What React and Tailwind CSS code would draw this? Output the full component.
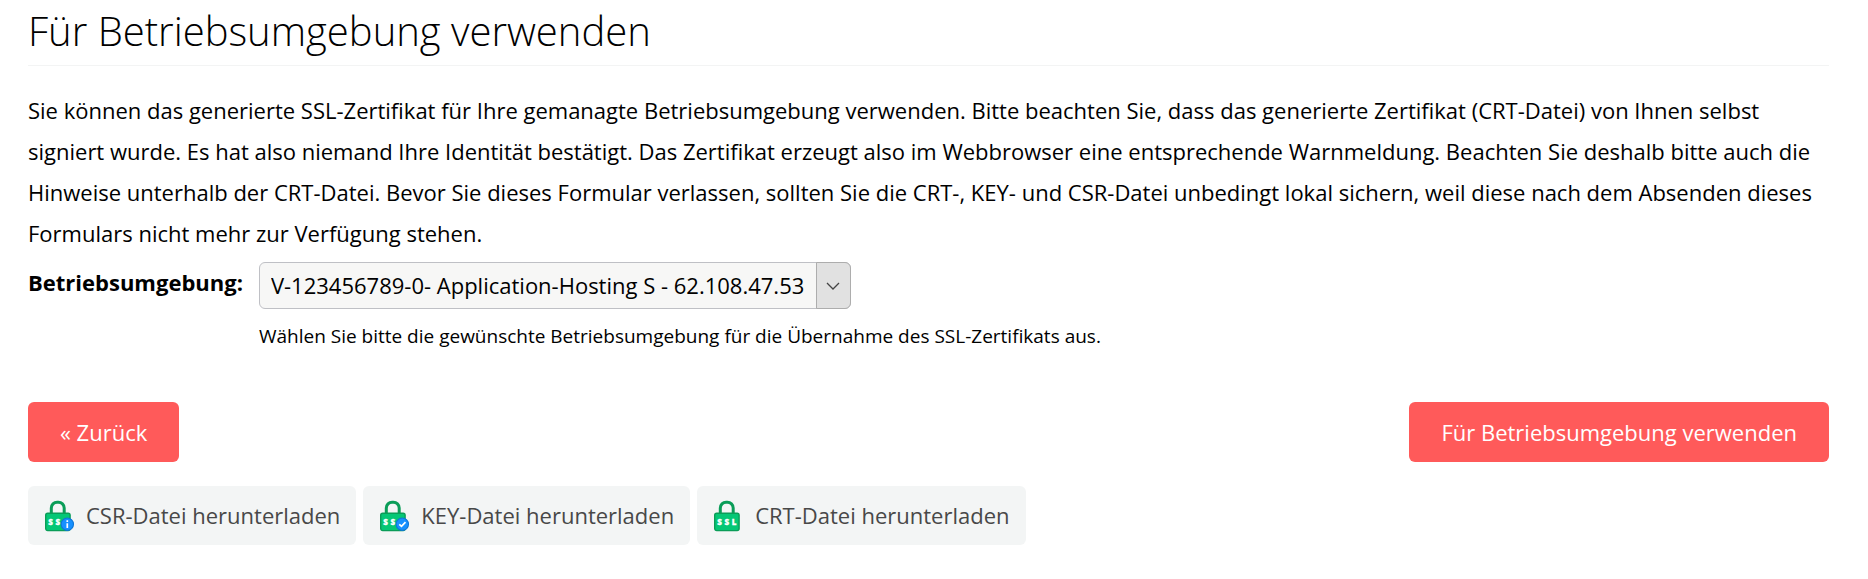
// Last step of the SSL generator: pick the hosting environment that should use
// the certificate, or download the generated files.

const environments = ['V-123456789-0- Application-Hosting S - 62.108.47.53']

const downloads = [
  { label: 'CSR-Datei herunterladen', badge: 'info' },
  { label: 'KEY-Datei herunterladen', badge: 'check' },
  { label: 'CRT-Datei herunterladen', badge: null },
]

function LockIcon({ badge }) {
  return (
    <svg width="32" height="32" viewBox="0 0 32 32" fill="none" className="shrink-0" aria-hidden="true">
      <path d="M7.3 14V8a5.8 5.8 0 0 1 5.8-5.8h1.3A5.8 5.8 0 0 1 20.2 8v6" stroke="#0a9d58" strokeWidth="3" />
      <rect x="1.7" y="13.2" width="24.4" height="17.4" rx="2" fill="#05c775" stroke="#0a9d58" strokeWidth="1.4" />
      <g fill="#fff" stroke="#fff" strokeWidth=".3" fontFamily="'Open Sans', sans-serif" fontWeight="800" fontSize="8" textAnchor="middle">
        <text x="6.6" y="25.2">S</text>
        <text x="13.8" y="25.2">S</text>
        {!badge && <text x="21" y="25.2">L</text>}
      </g>
      {badge && <circle cx="23.3" cy="24.2" r="6.2" fill="#1790ff" stroke="#0f76d6" strokeWidth="1.1" />}
      {badge === 'info' && <path d="M23.3 23.2v4.8M23.3 20.2v1.7" stroke="#fff" strokeWidth="1.7" />}
      {badge === 'check' && <path d="M20.3 24.3l2.2 2.1 4-4.2" stroke="#fff" strokeWidth="1.7" />}
    </svg>
  )
}

export default function App() {
  return (
    <main className="pl-7 pr-[39px] font-['Open_Sans',sans-serif] text-[22px] text-black">
      <h1 className="h-[66px] border-b border-[#f3f4f4] text-[40px] leading-[62px] font-light">
        Für Betriebsumgebung verwenden
      </h1>

      <form onSubmit={e => e.preventDefault()}>
        <p className="mt-6 leading-[41px]">
          Sie können das generierte SSL-Zertifikat für Ihre gemanagte Betriebsumgebung verwenden. Bitte beachten Sie,
          dass das generierte Zertifikat (CRT-Datei) von Ihnen selbst signiert wurde. Es hat also niemand Ihre
          Identität bestätigt. Das Zertifikat erzeugt also im Webbrowser eine entsprechende Warnmeldung. Beachten Sie
          deshalb bitte auch die Hinweise unterhalb der CRT-Datei. Bevor Sie dieses Formular verlassen, sollten Sie
          die CRT-, KEY- und CSR-Datei unbedingt lokal sichern, weil diese nach dem Absenden dieses Formulars nicht
          mehr zur Verfügung stehen.
        </p>

        <div className="mt-2 flex items-start gap-4">
          <label htmlFor="environment" className="leading-[41px] font-bold">Betriebsumgebung:</label>
          <div>
            <div className="relative w-fit">
              <select
                id="environment"
                aria-describedby="environment-hint"
                className="block h-[47px] w-[592px] appearance-none rounded-md border border-[#bfc0c5] bg-[#f7f7f6] pr-9 pl-[11px]"
              >
                {environments.map(env => <option key={env}>{env}</option>)}
              </select>
              {/* Arrow button drawn over the right end of the select */}
              <span className="pointer-events-none absolute inset-y-0 right-0 flex w-[35px] items-center justify-center rounded-r-md border border-[#adadad] bg-[#e1e1e1]">
                <svg width="14" height="8" viewBox="0 0 14 8" fill="none" stroke="#444" strokeWidth="1.3">
                  <path d="M1 1l6 6 6-6" />
                </svg>
              </span>
            </div>
            <p id="environment-hint" className="mt-[9px] text-[19px] leading-9">
              Wählen Sie bitte die gewünschte Betriebsumgebung für die Übernahme des SSL-Zertifikats aus.
            </p>
          </div>
        </div>

        <div className="mt-12 flex justify-between">
          <button type="button" className="h-[60px] rounded-md bg-[#ff5a5a] px-8 text-white">« Zurück</button>
          <button type="submit" className="h-[60px] rounded-md bg-[#ff5a5a] px-8 text-white">
            Für Betriebsumgebung verwenden
          </button>
        </div>
      </form>

      <div className="mt-6 flex gap-[7px]">
        {downloads.map(d => (
          <a key={d.label} href="#" className="flex h-[59px] items-center gap-[10px] rounded-md bg-[#f3f5f5] px-4 text-[#484848]">
            <LockIcon badge={d.badge} />
            {d.label}
          </a>
        ))}
      </div>
    </main>
  )
}
